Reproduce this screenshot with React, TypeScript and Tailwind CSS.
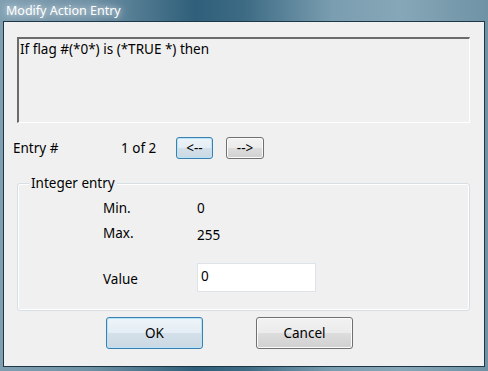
const font = { fontFamily: '"Noto Sans", "Open Sans", sans-serif' };

function WinButton({
  label,
  blue,
  className,
}: {
  label: string;
  blue?: boolean;
  className: string;
}) {
  return (
    <div
      className={
        "flex items-center justify-center rounded-[3px] border text-[13.5px] text-black " +
        (blue
          ? "border-[#3c7fb1] bg-[linear-gradient(#edf4f9_0%,#e4edf4_50%,#d4e0e9_51%,#cbd9e3_100%)] shadow-[inset_0_0_0_1px_#b8e4f7] "
          : "border-[#707070] bg-[linear-gradient(#f2f2f2_0%,#ebebeb_50%,#dddddd_51%,#d0d0d0_100%)] shadow-[inset_0_0_0_1px_#fbfbfb] ") +
        className
      }
    >
      {label}
    </div>
  );
}

export default function App() {
  return (
    <div
      className="flex h-[371px] w-[488px] flex-col bg-[linear-gradient(90deg,#7f9fb1_0%,#6f92a5_18%,#2f5f7a_40%,#3d6b84_50%,#7a9db0_68%,#86a7b7_82%,#6f93a5_100%)]"
      style={font}
    >
      {/* title bar */}
      <div className="flex h-[21px] items-center pl-[6px] pt-[1px]">
        <span className="text-[12.5px] leading-none text-white [text-shadow:0_0_6px_rgba(235,240,244,0.9),0_0_12px_rgba(235,240,244,0.7)]">
          Modify Action Entry
        </span>
      </div>

      {/* client area */}
      <div className="mx-[3px] mb-[4px] flex flex-1 flex-col border border-[#1d3746] bg-[#f0f0f0]">
        {/* condition text box */}
        <div className="ml-[13px] mt-[15px] h-[86px] w-[453px] border-b border-l-2 border-r border-t-2 border-b-white border-l-[#6b6b6b] border-r-white border-t-[#6b6b6b] pl-[1px] pt-[2px] text-[13.5px] leading-[16px] text-black">
          If flag #(*0*) is (*TRUE *) then
        </div>

        {/* entry navigation */}
        <div className="mt-[14px] flex h-[22px] items-center text-[13.5px] text-black">
          <span className="ml-[9px] w-[108px]">Entry #</span>
          <span className="w-[55px]">1 of 2</span>
          <WinButton label="<--" blue className="h-[22px] w-[37px]" />
          <WinButton label="-->" className="ml-[13px] h-[22px] w-[38px]" />
        </div>

        {/* group box */}
        <div className="relative ml-[13px] mt-[24px] h-[128px] w-[453px] rounded-[3px] border border-[#d5dfe5] shadow-[inset_0_0_0_1px_#ffffff]">
          <span className="absolute -top-[9px] left-[11px] bg-[#f0f0f0] px-[2px] text-[13.5px] leading-[16px] text-black">
            Integer entry
          </span>
          <div className="grid grid-cols-[94px_119px] gap-y-[9px] pl-[85px] pt-[16px] text-[13.5px] leading-[16px] text-black">
            <span>Min.</span>
            <span>0</span>
            <span>Max.</span>
            <span className="pt-[2px]">255</span>
          </div>
          <div className="mt-[20px] flex items-center pl-[85px] text-[13.5px] text-black">
            <span className="w-[94px] pt-[3px]">Value</span>
            <div className="h-[29px] w-[119px] border border-[#dde3e9] bg-white pl-[3px] pt-[4px] leading-[16px]">
              0
            </div>
          </div>
        </div>

        {/* dialog buttons */}
        <div className="ml-[102px] mt-[6px] flex gap-[53px]">
          <WinButton label="OK" blue className="h-[32px] w-[97px]" />
          <WinButton label="Cancel" className="h-[32px] w-[97px]" />
        </div>
      </div>
    </div>
  );
}
